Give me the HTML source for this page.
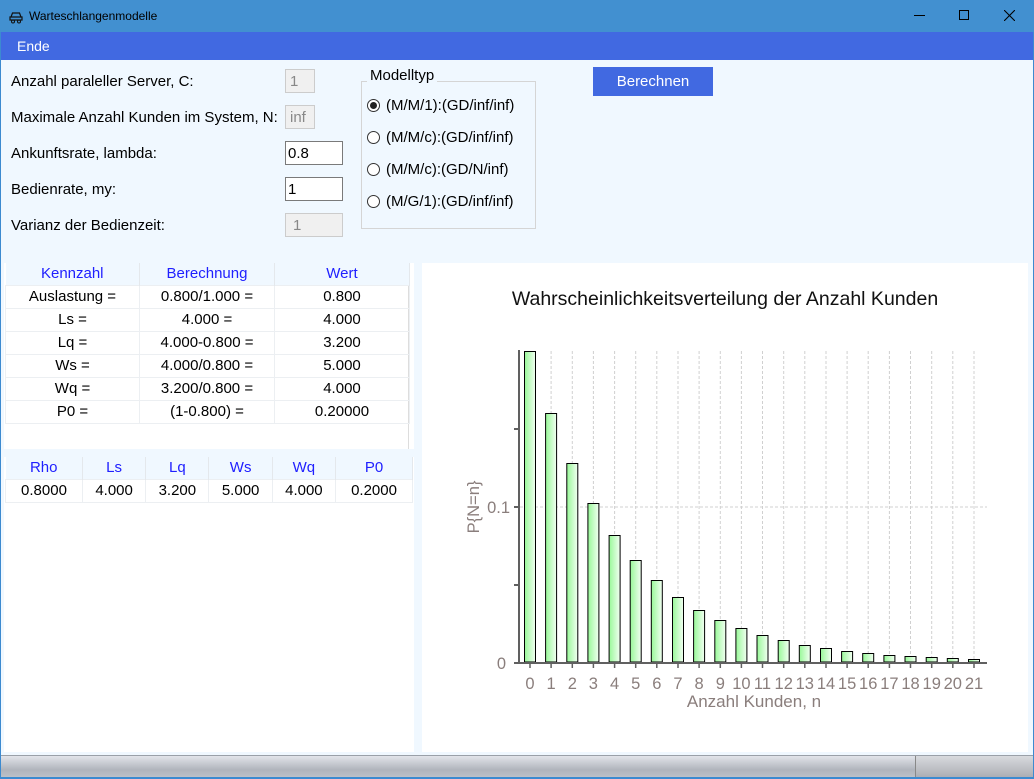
<!DOCTYPE html>
<html><head><meta charset="utf-8"><style>
*{margin:0;padding:0;box-sizing:border-box}
body{width:1034px;height:779px;overflow:hidden;background:#f0f8ff;font-family:"Liberation Sans",sans-serif;position:relative}
.abs{position:absolute}
.lbl{position:absolute;left:11px;font-size:15px;color:#000}
.tb{position:absolute;height:24px;font-size:15px;padding:3px 0 0 4px;border:1px solid #ccc;background:#f0f0f0;color:#888}
.tb.en{border:1px solid #7a7a7a;background:#fff;color:#000;padding-left:2px}
.radio{position:absolute;left:367px;width:13px;height:13px;border:1px solid #333;border-radius:50%;background:#fff}
.rt{position:absolute;left:386px;font-size:15px}
table{border-collapse:collapse;font-size:15px;position:absolute}
td{text-align:center;height:23px;border:1px solid #eceff2;padding:0}
th{font-weight:normal;color:#2020ff;height:22px;background:#f0f8ff;border-right:1px solid #e4e8ec}
</style></head><body>
<div class="abs" style="left:0;top:0;width:1034px;height:32px;background:#4290d0"></div>
<svg class="abs" style="left:9px;top:10px" width="14" height="14" viewBox="0 0 14 14"><path d="M2 7 L3.5 3 H10.5 L12 7 Z M1 7 H13 V10 H1 Z" fill="none" stroke="#111" stroke-width="1.2"/><circle cx="4" cy="11.5" r="1.5" fill="none" stroke="#111"/><circle cx="10" cy="11.5" r="1.5" fill="none" stroke="#111"/></svg>
<div class="abs" style="left:29px;top:9px;font-size:12px;color:#000">Warteschlangenmodelle</div>
<div class="abs" style="left:914px;top:15px;width:11px;height:1px;background:#000"></div>
<div class="abs" style="left:959px;top:10px;width:10px;height:10px;border:1px solid #000"></div>
<svg class="abs" style="left:1004px;top:10px" width="11" height="11"><path d="M0 0L11 11M11 0L0 11" stroke="#000" stroke-width="1.1"/></svg>
<div class="abs" style="left:0;top:32px;width:1034px;height:28px;background:#4169e1"></div>
<div class="abs" style="left:17px;top:38px;font-size:14px;color:#fff">Ende</div>
<div class="abs" style="left:0;top:32px;width:1px;height:747px;background:#3c8ad0"></div>
<div class="abs" style="left:1033px;top:32px;width:1px;height:747px;background:#3c8ad0"></div>

<div class="lbl" style="top:73px">Anzahl paraleller Server, C:</div>
<div class="lbl" style="top:109px">Maximale Anzahl Kunden im System, N:</div>
<div class="lbl" style="top:145px">Ankunftsrate, lambda:</div>
<div class="lbl" style="top:181px">Bedienrate, my:</div>
<div class="lbl" style="top:217px">Varianz der Bedienzeit:</div>
<div class="tb" style="left:285px;top:69px;width:30px">1</div>
<div class="tb" style="left:285px;top:105px;width:30px">inf</div>
<div class="tb en" style="left:285px;top:141px;width:58px">0.8</div>
<div class="tb en" style="left:285px;top:177px;width:58px">1</div>
<div class="tb" style="left:285px;top:213px;width:58px;padding-left:7px">1</div>

<div class="abs" style="left:361px;top:81px;width:175px;height:148px;border:1px solid #d5d5d5"></div>
<div class="abs" style="left:367px;top:67px;padding:0 3px;font-size:15px;background:#f0f8ff">Modelltyp</div>
<div class="radio" style="top:99px"><div style="width:7px;height:7px;border-radius:50%;background:#222;margin:2px"></div></div>
<div class="radio" style="top:131px"></div>
<div class="radio" style="top:163px"></div>
<div class="radio" style="top:195px"></div>
<div class="rt" style="top:97px">(M/M/1):(GD/inf/inf)</div>
<div class="rt" style="top:129px">(M/M/c):(GD/inf/inf)</div>
<div class="rt" style="top:161px">(M/M/c):(GD/N/inf)</div>
<div class="rt" style="top:193px">(M/G/1):(GD/inf/inf)</div>

<div class="abs" style="left:593px;top:67px;width:120px;height:29px;background:#4169e1;color:#fff;font-size:15px;text-align:center;line-height:29px">Berechnen</div>

<div class="abs" style="left:4px;top:263px;width:405px;height:186px;background:#fff;border-right:1px solid #ddd"></div>
<div class="abs" style="left:409px;top:263px;width:5px;height:186px;background:#fff"></div>
<div class="abs" style="left:4px;top:457px;width:410px;height:295px;background:#fff"></div>
<table style="left:5px;top:263px;width:405px">
<tr><th style="width:134px">Kennzahl</th><th style="width:135px">Berechnung</th><th>Wert</th></tr>
<tr><td>Auslastung =</td><td>0.800/1.000 =</td><td>0.800</td></tr>
<tr><td>Ls =</td><td>4.000 =</td><td>4.000</td></tr>
<tr><td>Lq =</td><td>4.000-0.800 =</td><td>3.200</td></tr>
<tr><td>Ws =</td><td>4.000/0.800 =</td><td>5.000</td></tr>
<tr><td>Wq =</td><td>3.200/0.800 =</td><td>4.000</td></tr>
<tr><td>P0 =</td><td>(1-0.800) =</td><td>0.20000</td></tr>
</table>
<table style="left:5px;top:457px;width:408px">
<tr><th>Rho</th><th>Ls</th><th>Lq</th><th>Ws</th><th>Wq</th><th>P0</th></tr>
<tr><td>0.8000</td><td>4.000</td><td>3.200</td><td>5.000</td><td>4.000</td><td>0.2000</td></tr>
</table>

<div class="abs" style="left:422px;top:263px;width:606px;height:489px;background:#fff"></div>
<svg class="abs" style="left:0;top:0" width="1034" height="779">
<defs><linearGradient id="g" x1="0" x2="1"><stop offset="0" stop-color="#98f898"/><stop offset="1" stop-color="#f2fff2"/></linearGradient></defs>
<text x="725" y="305" font-size="19.5" text-anchor="middle" font-family="Liberation Sans" fill="#111">Wahrscheinlichkeitsverteilung der Anzahl Kunden</text>
<g stroke="#d0d0d0" stroke-dasharray="3,2" stroke-width="1">
<line x1="520" y1="507" x2="987" y2="507"/>
<line x1="530" y1="351" x2="530" y2="662"/><line x1="551.1" y1="351" x2="551.1" y2="662"/><line x1="572.3" y1="351" x2="572.3" y2="662"/><line x1="593.4" y1="351" x2="593.4" y2="662"/><line x1="614.6" y1="351" x2="614.6" y2="662"/><line x1="635.7" y1="351" x2="635.7" y2="662"/><line x1="656.8" y1="351" x2="656.8" y2="662"/><line x1="678" y1="351" x2="678" y2="662"/><line x1="699.1" y1="351" x2="699.1" y2="662"/><line x1="720.3" y1="351" x2="720.3" y2="662"/><line x1="741.4" y1="351" x2="741.4" y2="662"/><line x1="762.5" y1="351" x2="762.5" y2="662"/><line x1="783.7" y1="351" x2="783.7" y2="662"/><line x1="804.8" y1="351" x2="804.8" y2="662"/><line x1="826" y1="351" x2="826" y2="662"/><line x1="847.1" y1="351" x2="847.1" y2="662"/><line x1="868.2" y1="351" x2="868.2" y2="662"/><line x1="889.4" y1="351" x2="889.4" y2="662"/><line x1="910.5" y1="351" x2="910.5" y2="662"/><line x1="931.7" y1="351" x2="931.7" y2="662"/><line x1="952.8" y1="351" x2="952.8" y2="662"/><line x1="974" y1="351" x2="974" y2="662"/>
</g>
<g fill="url(#g)" stroke="#000" stroke-width="1">
<rect x="524.5" y="351.5" width="11" height="310.5"/>
<rect x="545.6" y="413.5" width="11" height="248.5"/>
<rect x="566.8" y="463.5" width="11" height="198.5"/>
<rect x="587.9" y="503.5" width="11" height="158.5"/>
<rect x="609.1" y="535.5" width="11" height="126.5"/>
<rect x="630.2" y="560.5" width="11" height="101.5"/>
<rect x="651.3" y="580.5" width="11" height="81.5"/>
<rect x="672.5" y="597.5" width="11" height="64.5"/>
<rect x="693.6" y="610.5" width="11" height="51.5"/>
<rect x="714.8" y="620.5" width="11" height="41.5"/>
<rect x="735.9" y="628.5" width="11" height="33.5"/>
<rect x="757" y="635.5" width="11" height="26.5"/>
<rect x="778.2" y="640.5" width="11" height="21.5"/>
<rect x="799.3" y="645.5" width="11" height="16.5"/>
<rect x="820.5" y="648.5" width="11" height="13.5"/>
<rect x="841.6" y="651.5" width="11" height="10.5"/>
<rect x="862.7" y="653.5" width="11" height="8.5"/>
<rect x="883.9" y="655.5" width="11" height="6.5"/>
<rect x="905" y="656.5" width="11" height="5.5"/>
<rect x="926.2" y="657.5" width="11" height="4.5"/>
<rect x="947.3" y="658.5" width="11" height="3.5"/>
<rect x="968.5" y="659.5" width="11" height="2.5"/>
</g>
<g stroke="#606060" stroke-width="2">
<line x1="519" y1="350" x2="519" y2="663"/>
<line x1="514" y1="663" x2="987" y2="663"/>
<line x1="514" y1="429" x2="519" y2="429"/><line x1="514" y1="507" x2="519" y2="507"/><line x1="514" y1="585" x2="519" y2="585"/>
</g>
<g stroke="#606060" stroke-width="1.5">
<line x1="530" y1="663" x2="530" y2="668"/><line x1="551.1" y1="663" x2="551.1" y2="668"/><line x1="572.3" y1="663" x2="572.3" y2="668"/><line x1="593.4" y1="663" x2="593.4" y2="668"/><line x1="614.6" y1="663" x2="614.6" y2="668"/><line x1="635.7" y1="663" x2="635.7" y2="668"/><line x1="656.8" y1="663" x2="656.8" y2="668"/><line x1="678" y1="663" x2="678" y2="668"/><line x1="699.1" y1="663" x2="699.1" y2="668"/><line x1="720.3" y1="663" x2="720.3" y2="668"/><line x1="741.4" y1="663" x2="741.4" y2="668"/><line x1="762.5" y1="663" x2="762.5" y2="668"/><line x1="783.7" y1="663" x2="783.7" y2="668"/><line x1="804.8" y1="663" x2="804.8" y2="668"/><line x1="826" y1="663" x2="826" y2="668"/><line x1="847.1" y1="663" x2="847.1" y2="668"/><line x1="868.2" y1="663" x2="868.2" y2="668"/><line x1="889.4" y1="663" x2="889.4" y2="668"/><line x1="910.5" y1="663" x2="910.5" y2="668"/><line x1="931.7" y1="663" x2="931.7" y2="668"/><line x1="952.8" y1="663" x2="952.8" y2="668"/><line x1="974" y1="663" x2="974" y2="668"/>
</g>
<g font-family="Liberation Sans" font-size="16.5" fill="#8a7e7c" text-anchor="middle">
<text x="530" y="689">0</text><text x="551.1" y="689">1</text><text x="572.3" y="689">2</text><text x="593.4" y="689">3</text><text x="614.6" y="689">4</text><text x="635.7" y="689">5</text><text x="656.8" y="689">6</text><text x="678" y="689">7</text><text x="699.1" y="689">8</text><text x="720.3" y="689">9</text><text x="741.4" y="689">10</text><text x="762.5" y="689">11</text><text x="783.7" y="689">12</text><text x="804.8" y="689">13</text><text x="826" y="689">14</text><text x="847.1" y="689">15</text><text x="868.2" y="689">16</text><text x="889.4" y="689">17</text><text x="910.5" y="689">18</text><text x="931.7" y="689">19</text><text x="952.8" y="689">20</text><text x="974" y="689">21</text>
<text x="754" y="707" font-size="17">Anzahl Kunden, n</text>
<text x="506" y="669" text-anchor="end">0</text>
<text x="510" y="513" text-anchor="end">0.1</text>
<text transform="translate(479,507) rotate(-90)">P{N=n}</text>
</g>
</svg>

<div class="abs" style="left:1px;top:755px;width:1032px;height:1px;background:#9aa0a8"></div>
<div class="abs" style="left:1px;top:756px;width:1032px;height:23px;background:linear-gradient(#e2e4ea,#b0b4bc 60%,#c0c4ca)"></div>
<div class="abs" style="left:915px;top:756px;width:1px;height:22px;background:#888"></div>
<div class="abs" style="left:916px;top:756px;width:117px;height:23px;background:linear-gradient(#d8dade,#a8aab0)"></div>
<div class="abs" style="left:0;top:777px;width:1034px;height:2px;background:#3c8ad0"></div>
</body></html>
